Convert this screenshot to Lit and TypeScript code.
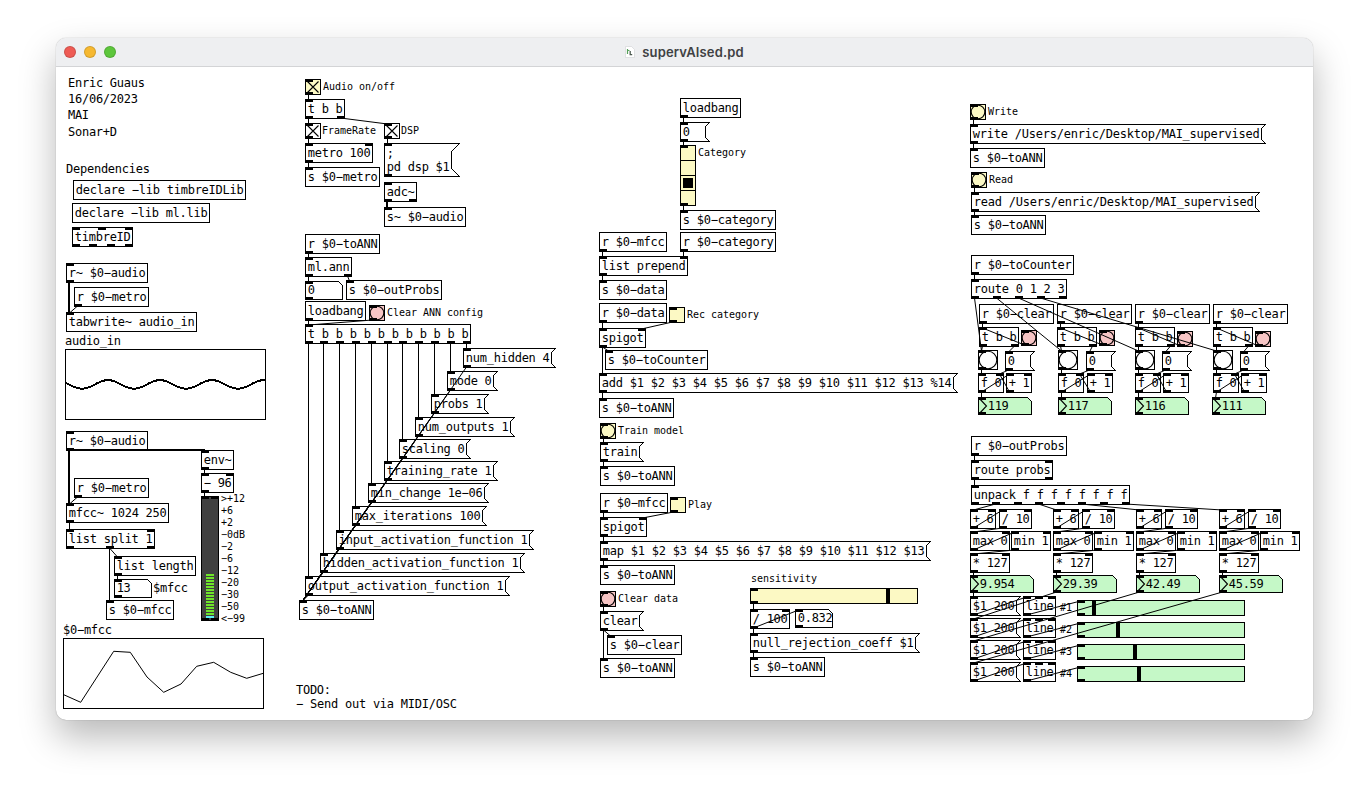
import { LitElement, html, svg, css } from "lit";
import { customElement } from "lit/decorators.js";

const YELLOW = "#fcf9c4";
const PINK = "#f7c5c5";
const GREEN = "#c5f8c7";
const CHAR = 7;

type Box = [kind: "obj" | "msg" | "atom", x: number, y: number, text: string, ins: number, outs: number];
type Widget = [kind: "tgl" | "on" | "bng", x: number, y: number, size: number, fill: string];
type Label = [x: number, y: number, text: string, small?: boolean];
type Wire = [x1: number, y1: number, x2: number, y2: number];

const boxes: Box[] = [
  ["obj", 73, 180, "declare −lib timbreIDLib", 0, 0],
  ["obj", 72, 203, "declare −lib ml.lib", 0, 0],
  ["obj", 72, 227, "timbreID", 3, 4],
  ["obj", 66, 263, "r~ $0−audio", 1, 1],
  ["obj", 74, 287, "r $0−metro", 0, 1],
  ["obj", 66, 312, "tabwrite~ audio_in", 1, 0],
  ["obj", 66, 431, "r~ $0−audio", 1, 1],
  ["obj", 201, 450, "env~", 1, 1],
  ["obj", 201, 473, "− 96", 2, 1],
  ["obj", 74, 478, "r $0−metro", 0, 1],
  ["obj", 66, 503, "mfcc~ 1024 250", 1, 1],
  ["obj", 66, 529, "list split 1", 2, 3],
  ["obj", 114, 556, "list length", 1, 1],
  ["atom", 114, 579, "13", 1, 1],
  ["obj", 106, 600, "s $0−mfcc", 1, 0],

  ["obj", 305, 99, "t b b", 1, 2],
  ["obj", 305, 143, "metro 100", 2, 1],
  ["obj", 305, 167, "s $0−metro", 1, 0],
  ["msg", 384, 143, ";\npd dsp $1", 1, 1],
  ["obj", 384, 182, "adc~", 1, 2],
  ["obj", 384, 207, "s~ $0−audio", 1, 0],
  ["obj", 305, 234, "r $0−toANN", 0, 1],
  ["obj", 305, 257, "ml.ann", 1, 2],
  ["atom", 305, 281, "0", 1, 1],
  ["obj", 346, 280, "s $0−outProbs", 1, 0],
  ["obj", 305, 301, "loadbang", 0, 1],
  ["obj", 305, 324, "t b b b b b b b b b b b", 1, 11],
  ["obj", 299, 600, "s $0−toANN", 1, 0],

  ["obj", 680, 98, "loadbang", 0, 1],
  ["msg", 680, 122, "0", 1, 1],
  ["obj", 680, 210, "s $0−category", 1, 0],
  ["obj", 680, 232, "r $0−category", 0, 1],
  ["obj", 599, 232, "r $0−mfcc", 0, 1],
  ["obj", 599, 256, "list prepend", 2, 1],
  ["obj", 599, 280, "s $0−data", 1, 0],
  ["obj", 599, 303, "r $0−data", 0, 1],
  ["obj", 599, 328, "spigot", 2, 1],
  ["obj", 605, 350, "s $0−toCounter", 1, 0],
  ["msg", 599, 373, "add $1 $2 $3 $4 $5 $6 $7 $8 $9 $10 $11 $12 $13 %14", 1, 1],
  ["obj", 599, 398, "s $0−toANN", 1, 0],
  ["msg", 600, 442, "train", 1, 1],
  ["obj", 600, 466, "s $0−toANN", 1, 0],
  ["obj", 600, 493, "r $0−mfcc", 0, 1],
  ["obj", 600, 517, "spigot", 2, 1],
  ["msg", 600, 541, "map $1 $2 $3 $4 $5 $6 $7 $8 $9 $10 $11 $12 $13", 1, 1],
  ["obj", 600, 565, "s $0−toANN", 1, 0],
  ["msg", 600, 611, "clear", 1, 1],
  ["obj", 607, 635, "s $0−clear", 1, 0],
  ["obj", 600, 658, "s $0−toANN", 1, 0],
  ["obj", 750, 609, "/ 100", 2, 1],
  ["atom", 795, 609, "0.832", 1, 1],
  ["msg", 750, 633, "null_rejection_coeff $1", 1, 1],
  ["obj", 750, 657, "s $0−toANN", 1, 0],

  ["msg", 970, 124, "write /Users/enric/Desktop/MAI_supervised", 1, 1],
  ["obj", 970, 148, "s $0−toANN", 1, 0],
  ["msg", 971, 192, "read /Users/enric/Desktop/MAI_supervised", 1, 1],
  ["obj", 971, 215, "s $0−toANN", 1, 0],
  ["obj", 971, 255, "r $0−toCounter", 0, 1],
  ["obj", 971, 279, "route 0 1 2 3", 1, 5],
  ["obj", 971, 436, "r $0−outProbs", 0, 1],
  ["obj", 971, 460, "route probs", 2, 2],
  ["obj", 971, 485, "unpack f f f f f f f f", 1, 8],
];

const widgets: Widget[] = [
  ["on", 305, 79, 16, YELLOW],
  ["on", 305, 123, 16, "none"],
  ["on", 384, 123, 16, "none"],
  ["bng", 369, 305, 16, PINK],
  ["tgl", 669, 307, 16, YELLOW],
  ["bng", 600, 423, 16, YELLOW],
  ["tgl", 670, 497, 16, YELLOW],
  ["bng", 600, 591, 16, PINK],
  ["bng", 970, 104, 16, YELLOW],
  ["bng", 971, 172, 16, YELLOW],
];

const labels: Label[] = [
  [68, 87, "Enric Guaus"],
  [68, 103, "16/06/2023"],
  [68, 119, "MAI"],
  [68, 136, "Sonar+D"],
  [66, 173, "Dependencies"],
  [65, 345, "audio_in"],
  [153, 592, "$mfcc"],
  [63, 634, "$0−mfcc"],
  [296, 694, "TODO:"],
  [296, 708, "− Send out via MIDI/OSC"],
  [323, 90, "Audio on/off", true],
  [322, 134, "FrameRate", true],
  [401, 134, "DSP", true],
  [387, 316, "Clear ANN config", true],
  [698, 156, "Category", true],
  [687, 318, "Rec category", true],
  [618, 434, "Train model", true],
  [688, 508, "Play", true],
  [618, 602, "Clear data", true],
  [751, 582, "sensitivity", true],
  [988, 115, "Write", true],
  [989, 183, "Read", true],
];
[">+12", "+6", "+2", "−0dB", "−2", "−6", "−12", "−20", "−30", "−50", "<−99"].forEach((t, i) =>
  labels.push([221, 502 + i * 12, t, true]));

const wires: Wire[] = [
  [77.5, 306, 69.5, 313],
  [204.5, 469, 204.5, 474], [204.5, 492, 204.5, 497],
  [77.5, 497, 69.5, 504], [69.5, 522, 69.5, 530],
  [109.5, 548, 109.5, 601], [109.5, 548, 117.5, 557], [117.5, 575, 117.5, 580],
  [308.5, 94, 308.5, 100], [308.5, 118, 308.5, 124], [340.5, 118, 387.5, 124],
  [308.5, 138, 308.5, 144], [387.5, 138, 387.5, 144], [308.5, 162, 308.5, 168],
  [308.5, 253, 308.5, 258], [308.5, 276, 308.5, 282], [347.5, 276, 349.5, 281],
  [308.5, 320, 308.5, 325], [372.5, 320, 308.5, 325],
  [683.5, 117, 683.5, 123], [683.5, 141, 683.5, 146], [683.5, 205, 683.5, 211],
  [683.5, 251, 683.5, 257], [602.5, 251, 602.5, 257], [602.5, 275, 602.5, 281],
  [602.5, 322, 602.5, 329], [672.5, 322, 641.5, 329], [602.5, 347, 602.5, 374],
  [602.5, 347, 608.5, 351], [602.5, 392, 602.5, 399],
  [603.5, 438, 603.5, 443], [603.5, 461, 603.5, 467],
  [603.5, 512, 603.5, 518], [673.5, 512, 642.5, 518], [603.5, 536, 603.5, 542],
  [603.5, 560, 603.5, 566], [603.5, 606, 603.5, 612], [603.5, 630, 603.5, 659],
  [603.5, 630, 610.5, 636],
  [753.5, 603, 753.5, 610], [753.5, 628, 798.5, 610], [753.5, 628, 753.5, 634],
  [753.5, 652, 753.5, 658],
  [973.5, 119, 973.5, 125], [973.5, 143, 973.5, 149],
  [974.5, 187, 974.5, 193], [974.5, 211, 974.5, 216],
  [974.5, 274, 974.5, 280], [974.5, 455, 974.5, 461], [974.5, 479, 974.5, 486],
];

// Messages fanned out from the eleven-way trigger.
const config: [number, number, string][] = [
  [305, 576, "output_activation_function 1"],
  [320, 553, "hidden_activation_function 1"],
  [336, 530, "input_activation_function 1"],
  [352, 506, "max_iterations 100"],
  [368, 483, "min_change 1e−06"],
  [384, 461, "training_rate 1"],
  [399, 439, "scaling 0"],
  [415, 417, "num_outputs 1"],
  [431, 394, "probs 1"],
  [447, 371, "mode 0"],
  [463, 348, "num_hidden 4"],
];
config.forEach(([x, y, text]) => {
  boxes.push(["msg", x, y, text, 1, 1]);
  wires.push([x + 3.5, 343, x + 3.5, y + 1], [x + 3.5, y + 19, 302.5, 601]);
});

// Per-category counters.
const numbers: [number, number, number, string][] = [];
const counters = [
  { x: 979, bang: 978, bangY: 330, zero: 1005, plus: 1006, nbx: 978, value: "119" },
  { x: 1057, bang: 1058, bangY: 330, zero: 1086, plus: 1087, nbx: 1058, value: "117" },
  { x: 1135, bang: 1135, bangY: 331, zero: 1162, plus: 1163, nbx: 1135, value: "116" },
  { x: 1213, bang: 1213, bangY: 331, zero: 1240, plus: 1241, nbx: 1212, value: "111" },
];
counters.forEach((c, i) => {
  boxes.push(
    ["obj", c.x, 304, "r $0−clear", 0, 1],
    ["obj", c.x, 327, "t b b", 1, 2],
    ["msg", c.zero, 351, "0", 1, 1],
    ["obj", c.bang, 373, "f 0", 2, 1],
    ["obj", c.plus, 373, "+ 1", 2, 1],
  );
  widgets.push(["bng", c.x + 42, c.bangY, 16, PINK], ["bng", c.bang, 350, 20, "none"]);
  numbers.push([c.nbx, 397, 54, c.value]);
  wires.push(
    [c.x + 3.5, 323, c.x + 3.5, 328],
    [c.x + 45.5, c.bangY + 15, c.x + 3.5, 328],
    [c.x + 3.5, 346, c.bang + 3.5, 351],
    [c.x + 35.5, 346, c.zero + 3.5, 352],
    [c.bang + 3.5, 369, c.bang + 3.5, 374],
    [c.zero + 3.5, 370, c.bang + 21.5, 374],
    [c.bang + 3.5, 392, c.plus + 3.5, 374],
    [c.plus + 3.5, 392, c.bang + 21.5, 374],
    [c.bang + 3.5, 392, c.nbx + 3.5, 398],
    [974.5 + 22 * i, 298, c.bang + 3.5, 351],
  );
});

// Output probabilities, scaling and level sliders.
const sliders: [number, number, number, string][] = [[750, 588, 136, YELLOW]];
["9.954", "29.39", "42.49", "45.59"].forEach((value, i) => {
  const x = 970 + 83 * i;
  const y = 596 + 22 * i;
  boxes.push(
    ["obj", x, 509, "+ 6", 2, 1],
    ["obj", x + 29, 509, "/ 10", 2, 1],
    ["obj", x, 531, "max 0", 2, 1],
    ["obj", x + 41, 531, "min 1", 2, 1],
    ["obj", x, 553, "* 127", 2, 1],
    ["msg", 970, y, "$1 200", 1, 1],
    ["obj", 1023, y, "line", 3, 1],
  );
  numbers.push([x, 575, 64, value]);
  labels.push([1060, y + 15, "#" + (i + 1), true]);
  sliders.push([1077, y + 4, [15, 39, 56, 60][i], GREEN]);
  wires.push(
    [974.5 + Math.floor((151 / 7) * (2 * i + 1)), 504, x + 3.5, 510],
    [x + 3.5, 528, x + 32.5, 510],
    [x + 32.5, 528, x + 3.5, 532],
    [x + 3.5, 550, x + 44.5, 532],
    [x + 44.5, 550, x + 3.5, 554],
    [x + 3.5, 572, x + 3.5, 576],
    [x + 3.5, 592, 973.5, y + 1],
    [973.5, y + 19, 1026.5, y + 1],
    [1026.5, y + 19, 1080.5, y + 5],
  );
});

const write = (x: number, y: number, text: string, small = false) =>
  svg`<text class=${small ? "small" : "mono"} x=${x} y=${y} textLength=${text.length * (small ? 6 : CHAR)}>${text}</text>`;

const iolets = (x: number, y: number, w: number, count: number) =>
  Array.from({ length: count }, (_, i) =>
    svg`<rect class="iolet" x=${x + (count > 1 ? Math.floor(((w - 8) * i) / (count - 1)) : 0)} y=${y} width="8" height="3"></rect>`);

const drawBox = ([kind, x, y, text, ins, outs]: Box) => {
  const lines = text.split("\n");
  const n = Math.max(...lines.map((l) => l.length));
  const w = kind === "atom" ? 38 : Math.max(n, 3) * CHAR + 5;
  const h = kind === "atom" ? 19 : 6 + 14 * lines.length;
  const l = x + 0.5, t = y + 0.5, r = x + w - 0.5, b = y + h - 0.5;
  const f = lines.length > 1 ? 8 : 4;
  const d =
    kind === "obj" ? `M${l} ${t}H${r}V${b}H${l}Z`
    : kind === "atom" ? `M${l} ${t}H${r - 4}L${r} ${t + 4}V${b}H${l}Z`
    : `M${l} ${t}H${r + f}L${r} ${t + f}V${b - f}L${r + f} ${b}H${l}Z`;
  return svg`<path class="edge" d=${d}></path>
    ${iolets(x, y, w, ins)}${iolets(x, y + h - 3, w, outs)}
    ${lines.map((s, i) => write(x + 2.8, y + (kind === "atom" ? 13 : 14) + 14 * i, s))}`;
};

const drawWidget = ([kind, x, y, s, fill]: Widget) => svg`
  <rect class="edge" x=${x + 0.5} y=${y + 0.5} width=${s - 1} height=${s - 1} fill=${fill}></rect>
  ${kind === "bng" ? svg`<circle class="ring" cx=${x + s / 2} cy=${y + s / 2} r=${s / 2 - 1.2}></circle>` : ""}
  ${kind === "on" ? svg`<path class="ring" d="M${x + 2.5} ${y + 2.5}L${x + s - 2.5} ${y + s - 2.5}M${x + 2.5} ${y + s - 2.5}L${x + s - 2.5} ${y + 2.5}"></path>` : ""}
  ${iolets(x, y, s, 1)}${iolets(x, y + s - 3, s, 1)}`;

const drawNumber = ([x, y, w, text]: [number, number, number, string]) => svg`
  <path class="edge" fill=${GREEN} d="M${x + 0.5} ${y + 0.5}H${x + w - 4.5}L${x + w - 0.5} ${y + 4.5}V${y + 17.5}H${x + 0.5}Z"></path>
  <path class="ring" d="M${x + 0.5} ${y + 0.5}L${x + 8.5} ${y + 9}L${x + 0.5} ${y + 17.5}"></path>
  ${iolets(x, y, w, 1)}${iolets(x, y + 15, w, 1)}
  ${write(x + 9.8, y + 13, text)}`;

const drawSlider = ([x, y, knob, fill]: [number, number, number, string]) => svg`
  <rect class="edge" x=${x + 0.5} y=${y + 0.5} width="167" height="15" fill=${fill}></rect>
  <rect class="iolet" x=${x + knob} y=${y} width="4" height="16"></rect>
  ${iolets(x, y, 168, 1)}${iolets(x, y + 13, 168, 1)}`;

const wave = Array.from({ length: 101 }, (_, i) => {
  const x = 65 + i * 2;
  return `${x},${(384.4 - 4.3 * Math.cos((2 * Math.PI * (x - 108)) / 52)).toFixed(2)}`;
}).join(" ");

const mfcc = [[23, 809], [74, 832], [173, 679], [223, 682], [273, 756], [323, 802], [375, 777], [422, 724], [473, 712], [524, 742], [572, 760], [622, 745]]
  .map(([x, y]) => `${(56 + x / 3).toFixed(1)},${(425 + y / 3).toFixed(1)}`).join(" ");

@customElement("app-root")
export class AppRoot extends LitElement {
  static styles = css`
    :host {
      display: flex;
      box-sizing: border-box;
      width: 1369px;
      height: 794px;
      padding: 38px 56px 74px;
      background: #fff;
      overflow: hidden;
    }
    .window {
      display: flex;
      flex-direction: column;
      width: 1257px;
      height: 682px;
      border-radius: 10px;
      overflow: hidden;
      background: #fff;
      box-shadow: 0 0 1px rgba(0, 0, 0, 0.45), 0 17px 36px rgba(0, 0, 0, 0.28);
    }
    .bar {
      display: grid;
      grid-template-columns: 1fr auto 1fr;
      align-items: center;
      box-sizing: border-box;
      flex: none;
      height: 29px;
      padding: 0 8px;
      background: #eeeff1;
      border-bottom: 1px solid #d3d4d6;
    }
    .lights {
      display: flex;
      gap: 8px;
    }
    .light {
      box-sizing: border-box;
      width: 12px;
      height: 12px;
      border-radius: 50%;
      border: 0.5px solid rgba(0, 0, 0, 0.14);
    }
    .close { background: #ee5b54; }
    .minimise { background: #f6b830; }
    .zoom { background: #5dc63c; }
    .title {
      display: flex;
      align-items: center;
      gap: 7px;
      font: 600 13px/16px Inter, sans-serif;
      letter-spacing: 0.15px;
      color: #404143;
    }
    .patch {
      display: block;
      flex: none;
    }
    .mono, .small {
      font-family: "DejaVu Sans Mono", monospace;
      font-size: 12px;
      fill: #000;
      white-space: pre;
    }
    .small { font-size: 10px; }
    .edge {
      stroke: #000;
      stroke-width: 1;
      stroke-linejoin: bevel;
      shape-rendering: crispEdges;
    }
    path.edge:not([fill]) { fill: none; }
    .ring { fill: none; stroke: #000; stroke-width: 1.1; }
    .iolet { fill: #000; shape-rendering: crispEdges; }
    .wire { stroke: #000; stroke-width: 1; }
    .signal { stroke: #000; stroke-width: 2; }
    .wave { fill: none; stroke: #000; stroke-width: 2; shape-rendering: crispEdges; }
    .plot { fill: none; stroke: #000; stroke-width: 1; }
  `;

  render() {
    return html`
      <div class="window">
        <div class="bar">
          <div class="lights">
            <span class="light close"></span><span class="light minimise"></span><span class="light zoom"></span>
          </div>
          <div class="title">
            <svg width="10" height="12" viewBox="0 0 10 12">
              <path d="M.5 .5H6.5L9.5 3.5V11.5H.5Z" fill="#fff" stroke="#d4d6d8" stroke-width=".7"></path>
              <path d="M2.5 3V8M2.5 4.5H4.5" stroke="#55a05a" stroke-width="1.2" fill="none"></path>
              <path d="M5.2 5V8.6H7.2" stroke="#4c5a50" stroke-width="1.3" fill="none"></path>
            </svg>
            <span>supervAIsed.pd</span>
          </div>
        </div>
        <svg class="patch" width="1257" height="653" viewBox="56 67 1257 653">
          <rect class="edge" x="65.5" y="349.5" width="200" height="70" fill="none"></rect>
          <polyline class="wave" points=${wave}></polyline>
          <rect class="edge" x="63.5" y="638.5" width="200" height="70" fill="none"></rect>
          <polyline class="plot" points=${mfcc}></polyline>

          <rect class="edge" x="201.5" y="496.5" width="17" height="124" fill="#404040"></rect>
          ${Array.from({ length: 15 }, (_, i) => svg`<rect x="206" y=${574 + 3 * i} width="8" height="2" fill=${i < 14 ? "#6fe42a" : "#5cf0f5"}></rect>`)}
          ${iolets(201, 496, 18, 2)}${iolets(201, 618, 18, 2)}

          <rect class="edge" x="680.5" y="145.5" width="15" height="60" fill=${YELLOW}></rect>
          <path class="edge" d="M680.5 160.5H695.5M680.5 175.5H695.5M680.5 190.5H695.5"></path>
          <rect class="iolet" x="683" y="178" width="10" height="10"></rect>
          ${iolets(680, 145, 16, 1)}${iolets(680, 203, 16, 1)}

          ${sliders.map(drawSlider)}
          ${widgets.map(drawWidget)}
          ${numbers.map(drawNumber)}
          ${boxes.map(drawBox)}
          ${labels.map(([x, y, t, s]) => write(x, y, t, s))}
          ${wires.map(([a, b, c, d]) => svg`<line class="wire" x1=${a} y1=${b} x2=${c} y2=${d}></line>`)}
          <path class="signal" fill="none" d="M69 282V313M69 450V504M68 450H205M387 201V208"></path>
        </svg>
      </div>
    `;
  }
}
